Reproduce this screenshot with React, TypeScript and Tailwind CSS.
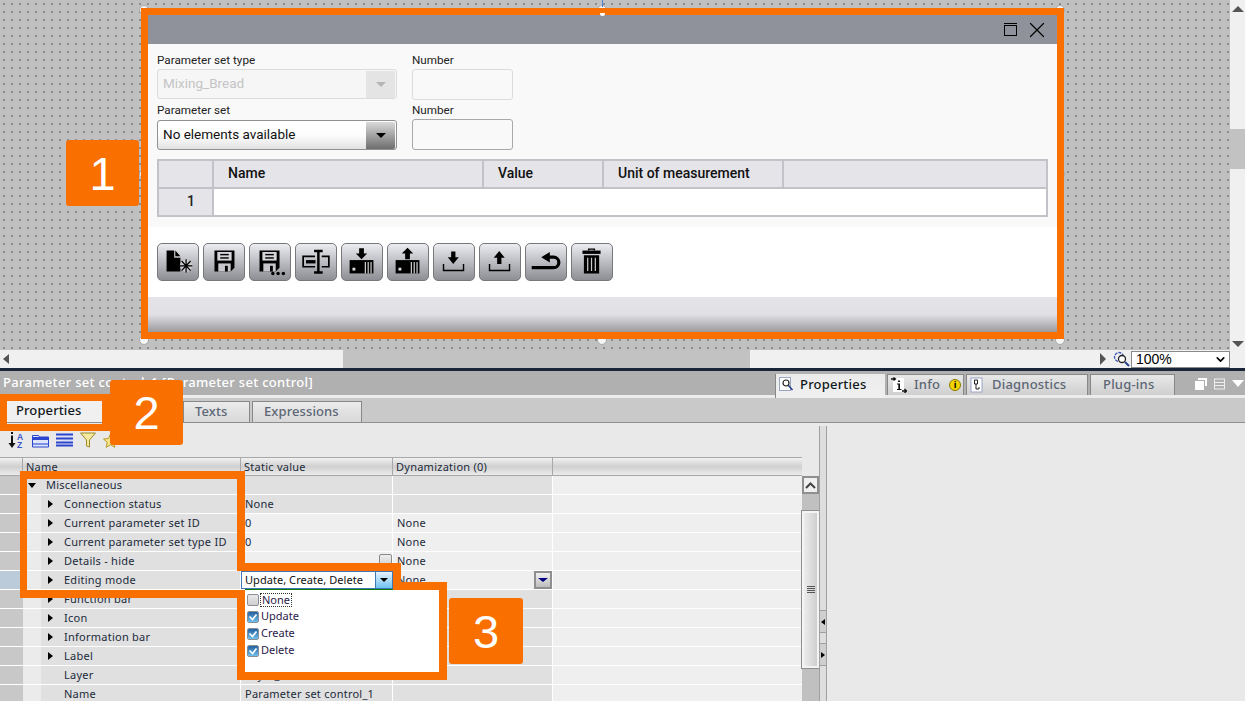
import React from "react";
import { ChevronDown, X } from "lucide-react";

const B = "#000";

function ToolIcon({ kind }: { kind: number }) {
  const common = { width: 42, height: 38, viewBox: "0 0 42 38", className: "block" };
  switch (kind) {
    case 0:
      return (
        <svg {...common}>
          <path d="M9 7h8v7.500h6.500V29H9z" fill={B} />
          <path d="M18.200 7l5.300 6h-5.300z" fill={B} />
          <circle cx="29.500" cy="23" r="6.500" fill="#cfcfd3" opacity="0.8" />
          <path d="M29.500 16v14M23 23h13M24.800 18l9.400 10M34.200 18l-9.400 10" stroke={B} strokeWidth="1.300" />
        </svg>
      );
    case 1:
      return (
        <svg {...common}>
          <path d="M11 7h21v18l-4 4H11z" fill={B} />
          <rect x="14" y="8.500" width="15" height="9" fill="#d6d6da" />
          <rect x="17" y="10.500" width="9" height="1.500" fill={B} />
          <rect x="17" y="14" width="9" height="1.500" fill={B} />
          <rect x="15" y="20.500" width="13" height="8.500" fill="#c8c8cc" />
          <rect x="22" y="23" width="3" height="6" fill={B} />
        </svg>
      );
    case 2:
      return (
        <svg {...common}>
          <path d="M10 7h21v18l-4 4H10z" fill={B} />
          <rect x="13" y="8.500" width="15" height="9" fill="#d6d6da" />
          <rect x="16" y="10.500" width="9" height="1.500" fill={B} />
          <rect x="16" y="14" width="9" height="1.500" fill={B} />
          <rect x="14" y="20.500" width="13" height="8.500" fill="#c8c8cc" />
          <rect x="21" y="23" width="3" height="6" fill={B} />
          <circle cx="24" cy="31" r="1.800" fill={B} />
          <circle cx="29.500" cy="31" r="1.800" fill={B} />
          <circle cx="35" cy="31" r="1.800" fill={B} />
        </svg>
      );
    case 3:
      return (
        <svg {...common}>
          <path d="M20 13H7.500v11H20M27 13h7.500v11H27" fill="none" stroke={B} strokeWidth="1.800" />
          <rect x="10.500" y="17" width="10" height="3.500" fill={B} />
          <path d="M19 7.500h9M19 30h9M23.500 7.500V30" stroke={B} strokeWidth="2.600" />
        </svg>
      );
    case 4:
    case 5:
      return (
        <svg {...common}>
          {kind === 4 ? (
            <path d="M18 4.500h5v5.500h3.500l-6 6-6-6H18z" fill={B} />
          ) : (
            <path d="M20.500 4l6 6H23v6h-5v-6h-3.500z" fill={B} />
          )}
          <rect x="8" y="17" width="25" height="14" fill={B} />
          <rect x="11" y="25" width="3" height="3" fill="#ddd" />
          <path d="M24.500 19v12M27.500 19v12M30.500 19v12" stroke="#ddd" strokeWidth="1.200" />
        </svg>
      );
    case 6:
      return (
        <svg {...common}>
          <path d="M18 8h4.500v6H26l-5.800 7-5.800-7H18z" fill={B} />
          <path d="M10 21v7h21v-7" fill="none" stroke={B} strokeWidth="1.500" />
        </svg>
      );
    case 7:
      return (
        <svg {...common}>
          <path d="M20.200 7.500l5.800 7h-3.500v6.500H18v-6.500h-3.600z" fill={B} />
          <path d="M10 21v7h21v-7" fill="none" stroke={B} strokeWidth="1.500" />
        </svg>
      );
    case 8:
      return (
        <svg {...common}>
          <path d="M6 25h23a5.500 5.500 0 0 0 0-11H21" fill="none" stroke={B} strokeWidth="3.400" />
          <path d="M25 8.500v11l-9-5.500z" fill={B} />
        </svg>
      );
    default:
      return (
        <svg {...common}>
          <path d="M17.500 7V5.500h6V7" fill="none" stroke={B} strokeWidth="1.500" />
          <rect x="11" y="7" width="19" height="3.500" fill={B} />
          <path d="M12.500 12h16v19h-16z" fill={B} />
          <path d="M16.500 14.500v14M20.500 14.500v14M24.500 14.500v14" stroke="#ccc" strokeWidth="1.300" />
        </svg>
      );
  }
}

const rows: { n: string; s?: string; d?: string; a?: boolean; lite?: boolean; sel?: boolean }[] = [
  { n: "Miscellaneous" },
  { n: "Connection status", s: "None", a: true },
  { n: "Current parameter set ID", s: "0", d: "None", a: true, lite: true },
  { n: "Current parameter set type ID", s: "0", d: "None", a: true, lite: true },
  { n: "Details - hide", d: "None", a: true, lite: true },
  { n: "Editing mode", d: "None", a: true, lite: true, sel: true },
  { n: "Function bar", a: true },
  { n: "Icon", a: true },
  { n: "Information bar", a: true },
  { n: "Label", a: true },
  { n: "Layer", s: "Layer_1" },
  { n: "Name", s: "Parameter set control_1" },
];

const Tri = ({ className }: { className: string }) => <span className={"block w-0 h-0 " + className} />;

function Checkbox({ on }: { on: boolean }) {
  return (
    <span className="w-[12px] h-[12px] border border-[#8a8f96] rounded-[2px] bg-gradient-to-b from-[#e8e8e8] to-[#cfcfcf] flex items-center justify-center shrink-0">
      {on && (
        <span className="w-full h-full rounded-[1px] bg-gradient-to-b from-[#24609f] to-[#6fc0ee] flex items-center justify-center">
          <svg width="10" height="10" viewBox="0 0 10 10">
            <path d="M1.500 4.500l3 3 4-5" fill="none" stroke="#fff" strokeWidth="1.600" />
          </svg>
        </span>
      )}
    </span>
  );
}

function Badge({ children, className }: { children: React.ReactNode; className: string }) {
  return (
    <div className={"absolute flex items-center justify-center bg-[#f96f00] rounded-[3px] text-white text-[47px] leading-none font-['Liberation_Sans',sans-serif] " + className}>
      {children}
    </div>
  );
}

const Or = ({ className }: { className: string }) => <div className={"absolute bg-[#f96f00] " + className} />;
const Handle = ({ className }: { className: string }) => (
  <div className={"absolute w-[10px] h-[10px] rounded-full bg-[#f4f4f4] border border-[#a8a8a8] " + className} />
);

export default function App() {
  const panel = "font-['Noto_Sans',sans-serif]";
  return (
    <div className={"relative w-[1245px] h-[701px] overflow-hidden bg-[#e9e9e9] text-[#1b2a3a] " + panel}>
      {/* design canvas + vertical scrollbar */}
      <div className="flex h-[350px]">
        <div className="w-[1230px] pl-[141px] pt-[8px] bg-[#c0c0c0] bg-[radial-gradient(#8c8c8c_0.9px,transparent_1.1px)] bg-[length:8px_8px]">
          <div className="relative z-[1] w-[923px] h-[331px] border-[7px] border-[#f96f00] flex flex-col bg-white">
            <div className="h-[29px] bg-[#8f929b] flex items-center justify-end gap-[7px] pr-[7px] shrink-0">
              <div className="w-[13px] h-[11px] border border-black relative top-[1px] before:content-[''] before:absolute before:left-[-1px] before:right-[-1px] before:top-[-3px] before:h-[1px] before:bg-black" />
              <X size={26} strokeWidth={1.1} color="#000" />
            </div>
            <div className="h-[183px] bg-[#f9f9fa] pl-[9px] pt-[9px] shrink-0 text-[#222] font-['Roboto',sans-serif]">
              <div className="flex gap-[15px]">
                <div className="w-[240px]">
                  <div className="text-[11.7px] leading-[15px] h-[16px]">Parameter set type</div>
                  <div className="h-[30px] border border-[#dcdcdc] rounded-[3px] bg-[#f6f6f7] flex items-center justify-between pl-[5px] pr-[1px]">
                    <span className="text-[13.5px] text-[#c4c4c4] -mt-[1px]">Mixing_Bread</span>
                    <span className="w-[29px] h-[27px] bg-[#e4e4e5] rounded-r-[2px] flex items-center justify-center">
                      <Tri className="border-l-[5px] border-r-[5px] border-t-[5px] border-l-transparent border-r-transparent border-t-[#b5b5b5]" />
                    </span>
                  </div>
                </div>
                <div className="w-[101px]">
                  <div className="text-[11.7px] leading-[15px] h-[16px]">Number</div>
                  <div className="h-[31px] border-[1.500px] border-[#dcdcdc] rounded-[3px]" />
                </div>
              </div>
              <div className="flex gap-[15px] mt-[3px]">
                <div className="w-[240px]">
                  <div className="text-[11.7px] leading-[15px] h-[17px]">Parameter set</div>
                  <div className="h-[30px] border border-[#909090] rounded-[3px] bg-gradient-to-b from-[#ffffff] via-[#fdfdfd] to-[#e2e2e4] flex items-center justify-between pl-[5px] pr-[1px]">
                    <span className="text-[13.5px] text-[#111] -mt-[1px]">No elements available</span>
                    <span className="w-[29px] h-[27px] bg-gradient-to-b from-[#dadada] to-[#6f6f6f] rounded-r-[2px] flex items-center justify-center">
                      <Tri className="border-l-[5px] border-r-[5px] border-t-[5px] border-l-transparent border-r-transparent border-t-black" />
                    </span>
                  </div>
                </div>
                <div className="w-[101px]">
                  <div className="text-[11.7px] leading-[15px] h-[17px]">Number</div>
                  <div className="h-[31px] -mt-[1px] border-[1.500px] border-[#a8a8a8] rounded-[3px]" />
                </div>
              </div>
              <div className="mt-[9px] w-[891px] h-[58px] border-2 border-[#c2c2c8] bg-white flex flex-col">
                <div className="flex h-[28px] bg-[#e4e4e9] text-[14px] font-medium text-[#111] border-b-2 border-[#c2c2c8]">
                  <div className="w-[55px] border-r-2 border-[#c2c2c8]" />
                  <div className="w-[270px] pl-[14px] border-r-2 border-[#c2c2c8] leading-[25px]">Name</div>
                  <div className="w-[120px] pl-[14px] border-r-2 border-[#c2c2c8] leading-[25px]">Value</div>
                  <div className="w-[180px] pl-[14px] border-r-2 border-[#c2c2c8] leading-[25px]">Unit of measurement</div>
                </div>
                <div className="flex h-[26px]">
                  <div className="w-[55px] bg-[#e4e4e9] border-r-2 border-[#c2c2c8] text-right pr-[17px] text-[14px] font-medium leading-[24px]">1</div>
                </div>
              </div>
            </div>
            <div className="h-[70px] bg-white flex gap-[4px] pl-[9px] pt-[16px] shrink-0">
              {[0, 1, 2, 3, 4, 5, 6, 7, 8, 9].map((k) => (
                <div key={k} className="w-[42px] h-[38px] rounded-[5px] border border-[#77777c] bg-gradient-to-b from-[#ecedf1] to-[#8e8f95] overflow-hidden flex items-center justify-center">
                  <ToolIcon kind={k} />
                </div>
              ))}
            </div>
            <div className="flex-1 bg-gradient-to-b from-[#e4e4e8] via-[#e1e1e5] to-[#9b9b9e]" />
          </div>
        </div>
        <div className="flex-1 bg-[#f0f0f0] flex flex-col items-center relative pt-[6px]">
          <Tri className="border-l-[6px] border-r-[6px] border-b-[6px] border-l-transparent border-r-transparent border-b-[#555]" />
          <div className="w-full h-[40px] bg-[#c2c2c2] mt-[117px]" />
          <div className="flex-1" />
          <Tri className="mb-[3px] border-l-[6px] border-r-[6px] border-t-[6px] border-l-transparent border-r-transparent border-t-[#555]" />
        </div>
      </div>

      {/* horizontal scrollbar */}
      <div className="flex items-center h-[18px] bg-[#f0f0f0]">
        <Tri className="ml-[3px] border-t-[5px] border-b-[5px] border-r-[6px] border-t-transparent border-b-transparent border-r-[#555]" />
        <div className="ml-[334px] w-[407px] h-full bg-[#c2c2c2]" />
        <Tri className="ml-[350px] border-t-[6px] border-b-[6px] border-l-[6px] border-t-transparent border-b-transparent border-l-[#555]" />
        <svg width="18" height="18" viewBox="0 0 18 18" className="ml-[7px]">
          <circle cx="6" cy="7" r="4.500" fill="none" stroke="#3a55b0" strokeWidth="1.300" strokeDasharray="3 1" />
          <circle cx="9" cy="9" r="3.500" fill="#fff" stroke="#222" strokeWidth="1.300" />
          <path d="M12 12l4 4" stroke="#27408b" strokeWidth="2" />
        </svg>
        <div className="w-[99px] h-[17px] bg-white border border-[#8a8a8a] flex items-center justify-between pl-[4px] pr-[2px] text-[14px] text-black font-['Liberation_Sans',sans-serif]">
          <span>100%</span>
          <ChevronDown size={13} strokeWidth={3} color="#000" />
        </div>
      </div>
      <div className="h-[3px] bg-[#1c2438]" />

      {/* inspector title bar */}
      <div className="h-[24px] bg-[#b0b0b0] flex items-end relative">
        <div className="w-[775px] pl-[3px] self-center text-[13px] font-medium text-white whitespace-nowrap tracking-[0.3px]">
          Parameter set control_1 [Parameter set control]
        </div>
        <div className="flex gap-[2px] h-[21px] text-[13px] font-medium tracking-[0.2px] text-[#5c6675]">
          <div className="w-[110px] h-[24px] -mb-[3px] bg-gradient-to-b from-[#ebebeb] to-[#f0f0f0] border-l border-[#888] flex items-center pl-[3px] pb-[3px] gap-[6px] text-[#101820]">
            <svg width="15" height="15" viewBox="0 0 15 15">
              <rect x="0.500" y="0.500" width="11" height="13" fill="#fff" stroke="#9aa5c8" />
              <circle cx="7" cy="6" r="3" fill="none" stroke="#222" strokeWidth="1.200" />
              <path d="M9.500 8.500l4 4.500" stroke="#27408b" strokeWidth="1.600" />
            </svg>
            Properties
          </div>
          <div className="w-[77px] bg-gradient-to-b from-[#e8e8e8] to-[#cfcfcf] border border-b-0 border-[#888] flex items-center pl-[3px]">
            <svg width="16" height="16" viewBox="0 0 16 16" className="mr-[7px]">
              <rect x="2" y="1" width="11" height="14" fill="#fff" />
              <path d="M0 2h4M2.500 0.500l2 1.500-2 1.500M11 14h4.500M13.500 12l2 2-2 2" stroke="#111" strokeWidth="1.300" fill="none" />
              <path d="M7 3.500h2v1.500H7zM6 6.500h3V12h1.500v1H6v-1h1.300V7.500H6z" fill="#111" />
            </svg>
            <span className="mr-[9px]">Info</span>
            <span className="w-[12px] h-[12px] rounded-full bg-[#f3d400] border border-[#8a7a00] text-[9px] leading-[10px] text-center font-bold text-black">i</span>
          </div>
          <div className="w-[122px] bg-gradient-to-b from-[#e8e8e8] to-[#cfcfcf] border border-b-0 border-[#888] flex items-center pl-[3px] gap-[8px]">
            <svg width="14" height="16" viewBox="0 0 14 16">
              <rect x="1" y="1" width="11" height="14" fill="#fff" stroke="#9aa5c8" />
              <path d="M4.500 3v4h3V3zM6 7v5h3V10" fill="none" stroke="#222" strokeWidth="1" />
            </svg>
            Diagnostics
          </div>
          <div className="w-[85px] bg-gradient-to-b from-[#e8e8e8] to-[#cfcfcf] border border-b-0 border-[#888] flex items-center pl-[12px]">
            Plug-ins
          </div>
        </div>
        <div className="absolute right-[1px] top-[7px] flex items-start gap-[7px]">
          <svg width="12" height="12" viewBox="0 0 12 12">
            <path d="M3 0h9v8H10V2H3z" fill="#fff" />
            <rect x="0" y="3" width="9" height="9" fill="#fff" />
          </svg>
          <svg width="11" height="12" viewBox="0 0 11 12">
            <rect x="0.500" y="1" width="10" height="10" fill="none" stroke="#eee" />
            <path d="M0 4.500h11M0 7.500h11" stroke="#eee" />
          </svg>
          <Tri className="mt-[2px] border-l-[6px] border-r-[6px] border-t-[7px] border-l-transparent border-r-transparent border-t-white" />
        </div>
      </div>
      <div className="h-[3px] bg-[#ececec]" />

      {/* sub tabs */}
      <div className="h-[25px] bg-[#c9c9c9] border-b border-[#8e8e8e] flex items-end text-[13px] font-medium tracking-[0.1px] text-[#5c6675]">
        <div className="ml-[7px] w-[95px] h-[24px] bg-[#f0f0f0] text-[#101820] pl-[9px] leading-[25px]">Properties</div>
        <div className="w-[81px] h-[21px] bg-[#dedede] pl-[8px] leading-[19px] border border-b-0 border-[#888]">Events</div>
        <div className="w-[67px] h-[21px] bg-gradient-to-b from-[#ebebeb] to-[#d8d8d8] pl-[11px] leading-[19px] border border-b-0 border-[#888]">Texts</div>
        <div className="ml-[2px] w-[110px] h-[21px] bg-gradient-to-b from-[#ebebeb] to-[#d8d8d8] pl-[11px] leading-[19px] border border-b-0 border-[#888]">Expressions</div>
      </div>

      <div className="flex h-[278px]">
        <div className="w-[819px] shrink-0">
          {/* filter toolbar */}
          <div className="h-[34px] flex items-center pl-[8px] gap-[7px]">
            <svg width="17" height="17" viewBox="0 0 17 17">
              <path d="M4 0v2M4 3.500V12" stroke="#111" strokeWidth="2" />
              <path d="M0.500 11h7L4 16z" fill="#111" />
              <text x="9" y="8" fontSize="8.500" fontWeight="700" fill="#3b55c9" fontFamily="Liberation Sans">A</text>
              <text x="9" y="16" fontSize="8.500" fontWeight="700" fill="#3b55c9" fontFamily="Liberation Sans">Z</text>
            </svg>
            <svg width="17" height="15" viewBox="0 0 17 15">
              <path d="M0.500 2.500h6l1 1.500h9v10h-16z" fill="#dfe6fc" stroke="#2a45d0" />
              <rect x="1" y="4" width="15" height="3" fill="#2a45d0" />
              <rect x="1" y="10" width="15" height="2" fill="#7d90e8" />
            </svg>
            <svg width="17" height="14" viewBox="0 0 17 14">
              <path d="M0 1.500h17M0 5.500h17M0 9.500h17M0 12.500h17" stroke="#2a45d0" strokeWidth="2" />
              <path d="M4 3.500h13M6 7.500h11" stroke="#d6defa" strokeWidth="1" />
            </svg>
            <svg width="16" height="16" viewBox="0 0 16 16">
              <path d="M0.500 1h15L9.500 8v7l-3-1V8z" fill="#f5e9a0" stroke="#9c8a2a" />
            </svg>
            <svg width="15" height="15" viewBox="0 0 15 15">
              <path d="M7.500 1l2 4.500 5 .5-3.700 3.300 1 5-4.300-2.600-4.300 2.600 1-5L.500 6l5-.5z" fill="#f4e38a" stroke="#b69a22" />
            </svg>
          </div>
          {/* table */}
          <div className="flex">
            <div className="w-[802px] shrink-0">
              <div className="flex h-[19px] text-[11px] tracking-[0.25px] leading-[19px] bg-gradient-to-b from-[#f2f2f2] via-[#d0d0d0] to-[#ebebeb] border-y border-[#a8a8a8]">
                <div className="w-[23px] border-r border-[#a8a8a8]" />
                <div className="w-[218px] pl-[3px] border-r border-[#a8a8a8] leading-[17px]">Name</div>
                <div className="w-[152px] pl-[3px] border-r border-[#a8a8a8] leading-[17px]">Static value</div>
                <div className="w-[160px] pl-[3px] border-r border-[#a8a8a8] leading-[17px]">Dynamization (0)</div>
                <div className="flex-1" />
              </div>
              {rows.map((r) => {
                const val = r.lite ? "bg-[#efefef]" : "bg-[#e0e0e0]";
                return (
                  <div key={r.n} className="flex h-[19px] text-[11px] tracking-[0.25px] leading-[18px] border-b border-white">
                    <div className={"w-[23px] shrink-0 " + (r.sel ? "bg-[#bccbd9]" : "bg-[#c8c8c8]")} />
                    {r.n === "Miscellaneous" ? (
                      <div className="w-[218px] shrink-0 bg-[#e0e0e0] border-r border-white flex items-center">
                        <Tri className="ml-[5px] border-l-[4px] border-r-[4px] border-t-[5px] border-l-transparent border-r-transparent border-t-black" />
                        <span className="ml-[10px]">Miscellaneous</span>
                      </div>
                    ) : (
                      <>
                        <div className="w-[18px] shrink-0 bg-[#ebebeb]" />
                        <div className="w-[200px] shrink-0 bg-[#e0e0e0] border-r border-white flex items-center">
                          <span className="w-[23px] pl-[7px] shrink-0">
                            {r.a && <Tri className="border-t-[4px] border-b-[4px] border-l-[5px] border-t-transparent border-b-transparent border-l-black" />}
                          </span>
                          <span className="whitespace-nowrap">{r.n}</span>
                        </div>
                      </>
                    )}
                    <div className={"w-[152px] shrink-0 pl-[4px] border-r border-white relative whitespace-nowrap " + val}>
                      {r.s}
                      {r.n === "Details - hide" && (
                        <span className="absolute right-[0px] top-[2px] w-[13px] h-[13px] rounded-[2px] border border-[#8a8a8a] bg-gradient-to-b from-[#eeeeee] to-[#cfcfcf]" />
                      )}
                    </div>
                    <div className={"w-[160px] shrink-0 pl-[4px] border-r border-white relative " + val}>
                      {r.d}
                      {r.sel && (
                        <span className="absolute right-0 top-0 w-[18px] h-[18px] border-2 border-[#8f8f8f] bg-gradient-to-b from-[#f0f0f0] to-[#bdbdbd] flex items-center justify-center">
                          <Tri className="border-l-[5px] border-r-[5px] border-t-[4px] border-l-transparent border-r-transparent border-t-[#000080]" />
                        </span>
                      )}
                    </div>
                    <div className="flex-1 bg-[#efefef]" />
                  </div>
                );
              })}
            </div>
            {/* list scrollbar */}
            <div className="w-[17px] shrink-0 flex flex-col mt-[19px] bg-[#c0c0c0]">
              <div className="h-[18px] border-2 border-[#8f8f8f] bg-[#f0f0f0] flex items-center justify-center">
                <svg width="11" height="7" viewBox="0 0 11 7">
                  <path d="M1 6l4.500-4.500L10 6" fill="none" stroke="#444" strokeWidth="2" />
                </svg>
              </div>
              <div className="h-[17px]" />
              <div className="h-[157px] border-2 border-[#f4f4f4] outline outline-1 outline-[#8f8f8f] bg-gradient-to-r from-[#ececec] to-[#cfcfcf] flex flex-col items-center justify-center gap-[1px]">
                <span className="w-[8px] h-[1px] bg-[#555]" />
                <span className="w-[8px] h-[1px] bg-[#555]" />
                <span className="w-[8px] h-[1px] bg-[#555]" />
                <span className="w-[8px] h-[1px] bg-[#555]" />
              </div>
            </div>
          </div>
        </div>
        {/* splitter */}
        <div className="w-[8px] shrink-0 mt-[3px] bg-[#dedede] border-x border-[#a0a0a0] flex flex-col">
          <div className="h-[184px]" />
          <div className="h-[23px] bg-[#cfcfcf] border-y border-[#a0a0a0] flex items-center justify-center">
            <Tri className="border-t-[3px] border-b-[3px] border-r-[4px] border-t-transparent border-b-transparent border-r-black" />
          </div>
          <div className="h-[10px]" />
          <div className="h-[23px] bg-[#cfcfcf] border-y border-[#a0a0a0] flex items-center justify-center">
            <Tri className="border-t-[3px] border-b-[3px] border-l-[4px] border-t-transparent border-b-transparent border-l-black" />
          </div>
        </div>
        <div className="flex-1" />
      </div>

      {/* combo open over the table */}
      <div className="absolute left-[241px] top-[571px] w-[152px] h-[18px] bg-white border border-[#3f78b5] pl-[3px] text-[11px] tracking-[0.05px] leading-[16px] text-[#111] whitespace-nowrap">
        Update, Create, Delete
        <span className="absolute right-[-1px] top-[-1px] w-[18px] h-[18px] border border-[#3f78b5] bg-gradient-to-b from-[#e6f3fb] to-[#6ec2f2] flex items-center justify-center">
          <Tri className="border-l-[4px] border-r-[4px] border-t-[4px] border-l-transparent border-r-transparent border-t-black" />
        </span>
      </div>
      <div className="absolute left-[245px] top-[589px] w-[195px] h-[84px] bg-white border-t border-[#0a7a0a] pl-[2px] pt-[1px] flex flex-col text-[11px] text-[#2a1a4a]">
        {[["None", false], ["Update", true], ["Create", true], ["Delete", true]].map(([t, on]) => (
          <div key={t as string} className="h-[17px] flex items-center gap-[2px]">
            <Checkbox on={on as boolean} />
            <span className={on ? "" : "outline outline-1 outline-dotted outline-[#333] leading-[12px] px-[1px]"}>{t as string}</span>
          </div>
        ))}
      </div>

      {/* handles, under the annotation frame of the selected control */}
      <Handle className="left-[139px] top-[169px]" />
      <Handle className="left-[1055px] top-[169px]" />
      <Handle className="left-[597px] top-[5px]" />
      <Handle className="left-[597px] top-[335px]" />
      <Handle className="left-[139px] top-[335px]" />
      <Handle className="left-[1055px] top-[335px]" />
      <Handle className="left-[1055px] top-[5px]" />
      <Handle className="left-[139px] top-[5px]" />
      <div className="absolute z-[2] left-[600px] top-[13px] w-[5px] h-[3px] rounded-b-full bg-white" />
      <div className="absolute left-[602px] top-0 w-[1px] h-[7px] bg-[#4a7fe0]" />

      {/* annotation frames */}
      <Or className="left-0 top-[394px] w-[110px] h-[7px]" />
      <Or className="left-0 top-[424px] w-[110px] h-[7px]" />
      <Or className="left-0 top-[394px] w-[7px] h-[37px]" />
      <Or className="left-[102px] top-[394px] w-[8px] h-[37px]" />

      <Or className="left-[20px] top-[471px] w-[225px] h-[8px]" />
      <Or className="left-[20px] top-[471px] w-[7px] h-[127px]" />
      <Or className="left-[20px] top-[590px] w-[225px] h-[8px]" />
      <Or className="left-[237px] top-[471px] w-[8px] h-[100px]" />
      <Or className="left-[237px] top-[563px] w-[164px] h-[8px]" />
      <Or className="left-[393px] top-[563px] w-[8px] h-[27px]" />
      <Or className="left-[393px] top-[582px] w-[54px] h-[8px]" />
      <Or className="left-[439px] top-[582px] w-[8px] h-[98px]" />
      <Or className="left-[237px] top-[672px] w-[210px] h-[8px]" />
      <Or className="left-[237px] top-[590px] w-[8px] h-[90px]" />

      <Badge className="left-[66px] top-[140px] w-[73px] h-[66px]">1</Badge>
      <Badge className="left-[110px] top-[380px] w-[73px] h-[65px]">2</Badge>
      <Badge className="left-[449px] top-[598px] w-[74px] h-[66px]">3</Badge>
    </div>
  );
}
